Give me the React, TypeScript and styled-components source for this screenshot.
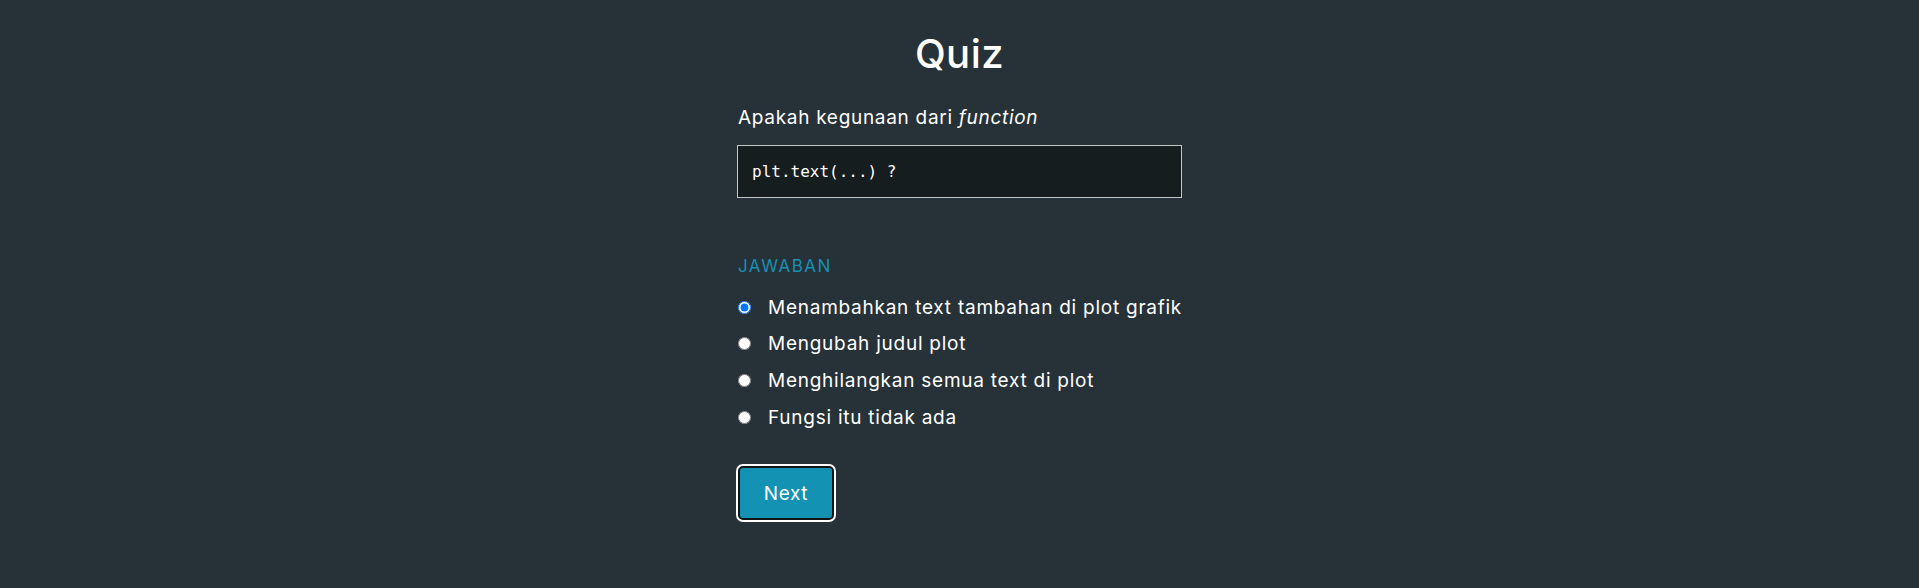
import React, { useState } from "react";
import styled, { createGlobalStyle } from "styled-components";

const Global = createGlobalStyle`
  html, body { margin: 0; padding: 0; background: #263238; }
  body { font-family: "Inter", "Noto Sans", sans-serif; color: #ffffff; }
`;

const Page = styled.div`
  min-height: 588px;
  display: flex;
  flex-direction: column;
  align-items: center;
  padding-top: 30px;
  box-sizing: border-box;
`;

const Title = styled.h1`
  margin: 0;
  font-size: 40px;
  line-height: 48px;
  font-weight: 500;
  text-align: center;
  letter-spacing: 0.5px;
`;

const Panel = styled.div`
  width: 445px;
  display: flex;
  flex-direction: column;
  margin-top: 26px;
`;

const Question = styled.p`
  margin: 0 1px;
  font-size: 19px;
  line-height: 28px;
  letter-spacing: 0.7px;
  em { font-style: italic; }
`;

const CodeBox = styled.pre`
  margin: 13px 0 0;
  height: 53px;
  box-sizing: border-box;
  border: 1px solid #c4c7c8;
  background: #161d1e;
  padding: 0 14px;
  display: flex;
  align-items: center;
  font-family: "DejaVu Sans Mono", monospace;
  font-size: 16px;
  color: #ffffff;
`;

const Label = styled.div`
  margin: 56px 1px 0;
  font-size: 17px;
  line-height: 24px;
  color: #1a8fb2;
  letter-spacing: 1.5px;
`;

const Options = styled.div`
  display: flex;
  flex-direction: column;
  margin-top: 11px;
`;

const Option = styled.label`
  display: flex;
  align-items: center;
  height: 36.6px;
  font-size: 19px;
  letter-spacing: 0.75px;
  white-space: nowrap;
  cursor: pointer;
`;

const Radio = styled.input`
  margin: 0 17px 0 1px;
  width: 13px;
  height: 13px;
  flex-shrink: 0;
`;

const NextButton = styled.button`
  margin-top: 31px;
  margin-left: 1px;
  align-self: flex-start;
  width: 96px;
  height: 54px;
  box-sizing: border-box;
  background: #1492b3;
  color: #ffffff;
  border: 2px solid #101414;
  border-radius: 5px;
  box-shadow: 0 0 0 2px #ffffff;
  font-family: inherit;
  font-size: 19px;
  letter-spacing: 0.6px;
  cursor: pointer;
`;

const answers = [
  "Menambahkan text tambahan di plot grafik",
  "Mengubah judul plot",
  "Menghilangkan semua text di plot",
  "Fungsi itu tidak ada",
];

export default function App() {
  const [choice, setChoice] = useState(0);
  return (
    <>
      <Global />
      <Page>
        <Title>Quiz</Title>
        <Panel>
          <Question>
            Apakah kegunaan dari <em>function</em>
          </Question>
          <CodeBox>plt.text(...) ?</CodeBox>
          <Label>JAWABAN</Label>
          <Options>
            {answers.map((a, i) => (
              <Option key={a}>
                <Radio
                  type="radio"
                  name="answer"
                  checked={choice === i}
                  onChange={() => setChoice(i)}
                />
                {a}
              </Option>
            ))}
          </Options>
          <NextButton>Next</NextButton>
        </Panel>
      </Page>
    </>
  );
}
